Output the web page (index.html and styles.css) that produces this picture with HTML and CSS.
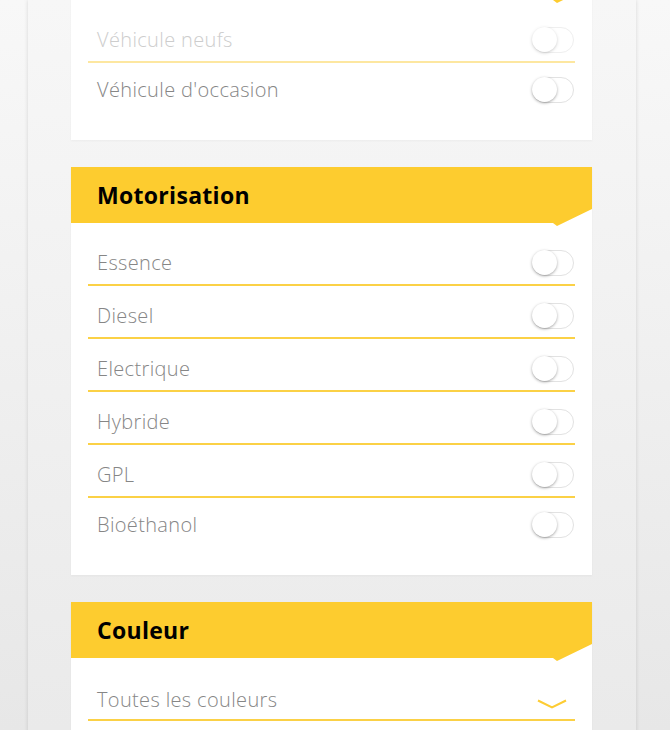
FILE: index.html
```html
<!DOCTYPE html>
<html lang="fr">
<head>
<meta charset="utf-8">
<title>Filtres</title>
<link rel="stylesheet" href="styles.css">
</head>
<body>
<div class="panel">
  <section class="card card-first">
    <div class="card-header"></div>
    <div class="card-body">
      <div class="row row-disabled"><span class="label">Véhicule neufs</span><span class="toggle"><span class="knob"></span></span></div>
      <div class="row row-last row-short"><span class="label">Véhicule d'occasion</span><span class="toggle"><span class="knob"></span></span></div>
    </div>
  </section>
  <section class="card">
    <div class="card-header"><h2>Motorisation</h2></div>
    <div class="card-body">
      <div class="row"><span class="label">Essence</span><span class="toggle"><span class="knob"></span></span></div>
      <div class="row"><span class="label">Diesel</span><span class="toggle"><span class="knob"></span></span></div>
      <div class="row"><span class="label">Electrique</span><span class="toggle"><span class="knob"></span></span></div>
      <div class="row"><span class="label">Hybride</span><span class="toggle"><span class="knob"></span></span></div>
      <div class="row"><span class="label">GPL</span><span class="toggle"><span class="knob"></span></span></div>
      <div class="row row-last row-short"><span class="label">Bioéthanol</span><span class="toggle"><span class="knob"></span></span></div>
    </div>
  </section>
  <section class="card">
    <div class="card-header"><h2>Couleur</h2></div>
    <div class="card-body">
      <div class="row row-select"><span class="label">Toutes les couleurs</span>
        <svg class="chevron" width="30" height="10" viewBox="0 0 30 10"><polyline points="1,1.5 15,8.5 29,1.5" fill="none" stroke="#fdcc33" stroke-width="2"/></svg>
      </div>
    </div>
  </section>
</div>
</body>
</html>
```
FILE: styles.css
```css
html, body {
  margin: 0;
  padding: 0;
  height: 100%;
  overflow: hidden;
}
body {
  background: linear-gradient(#f8f8f8, #e7e7e7);
  font-family: "Open Sans", "Liberation Sans", sans-serif;
}
.panel {
  margin-left: 28px;
  width: 608px;
  min-height: 100%;
  box-sizing: border-box;
  padding: 0 44px 40px 43px;
  background: linear-gradient(#f7f7f7, #e9e9e9);
  box-shadow: 0 0 4px rgba(0, 0, 0, 0.14);
  display: flex;
  flex-direction: column;
  gap: 27px;
}
.card {
  background: #fff;
  box-shadow: 0 1px 2px rgba(0, 0, 0, 0.04);
}
.card-first {
  margin-top: -56px;
}
.card-header {
  height: 59px;
  margin-bottom: -3px;
  position: relative;
  z-index: 1;
  background: #fdcc2f;
  clip-path: polygon(0 0, 100% 0, 100% calc(100% - 17px), calc(100% - 35px) 100%, calc(100% - 39px) calc(100% - 3px), 0 calc(100% - 3px));
  display: flex;
  align-items: center;
  padding-left: 26px;
  padding-bottom: 3px;
  box-sizing: border-box;
}
.card-header h2 {
  margin: 0;
  font-size: 23px;
  font-weight: 700;
  color: #000;
  letter-spacing: 0.3px;
}
.card-body {
  padding: 10px 17px 24px 17px;
}
.row {
  box-sizing: border-box;
  height: 53px;
  border-bottom: 2px solid #fbd146;
  padding: 0 0 8px 9px;
  display: flex;
  align-items: flex-end;
  justify-content: space-between;
}
.row-last {
  border-bottom-color: transparent;
}
.row-short {
  padding-bottom: 11px;
}
.label {
  font-size: 20px;
  font-weight: 300;
  color: #868686;
  line-height: 26px;
  letter-spacing: 0.35px;
}
.toggle {
  width: 40px;
  height: 24px;
  margin-right: 1px;
  border: 1px solid #e2e2e2;
  border-radius: 13px;
  background: #fff;
  position: relative;
  box-sizing: content-box;
}
.knob {
  position: absolute;
  left: -1px;
  top: -1px;
  width: 25px;
  height: 25px;
  border-radius: 50%;
  background: #fff;
  box-shadow: 0 1px 3px rgba(0, 0, 0, 0.35);
}
.row-disabled {
  border-bottom-color: #fde7a0;
}
.row-disabled .label {
  color: #cdcdcd;
}
.row-disabled .toggle {
  opacity: 0.55;
}
.row-select {
  padding-bottom: 6px;
}
.chevron {
  margin-right: 8px;
  margin-bottom: 4px;
}
```
